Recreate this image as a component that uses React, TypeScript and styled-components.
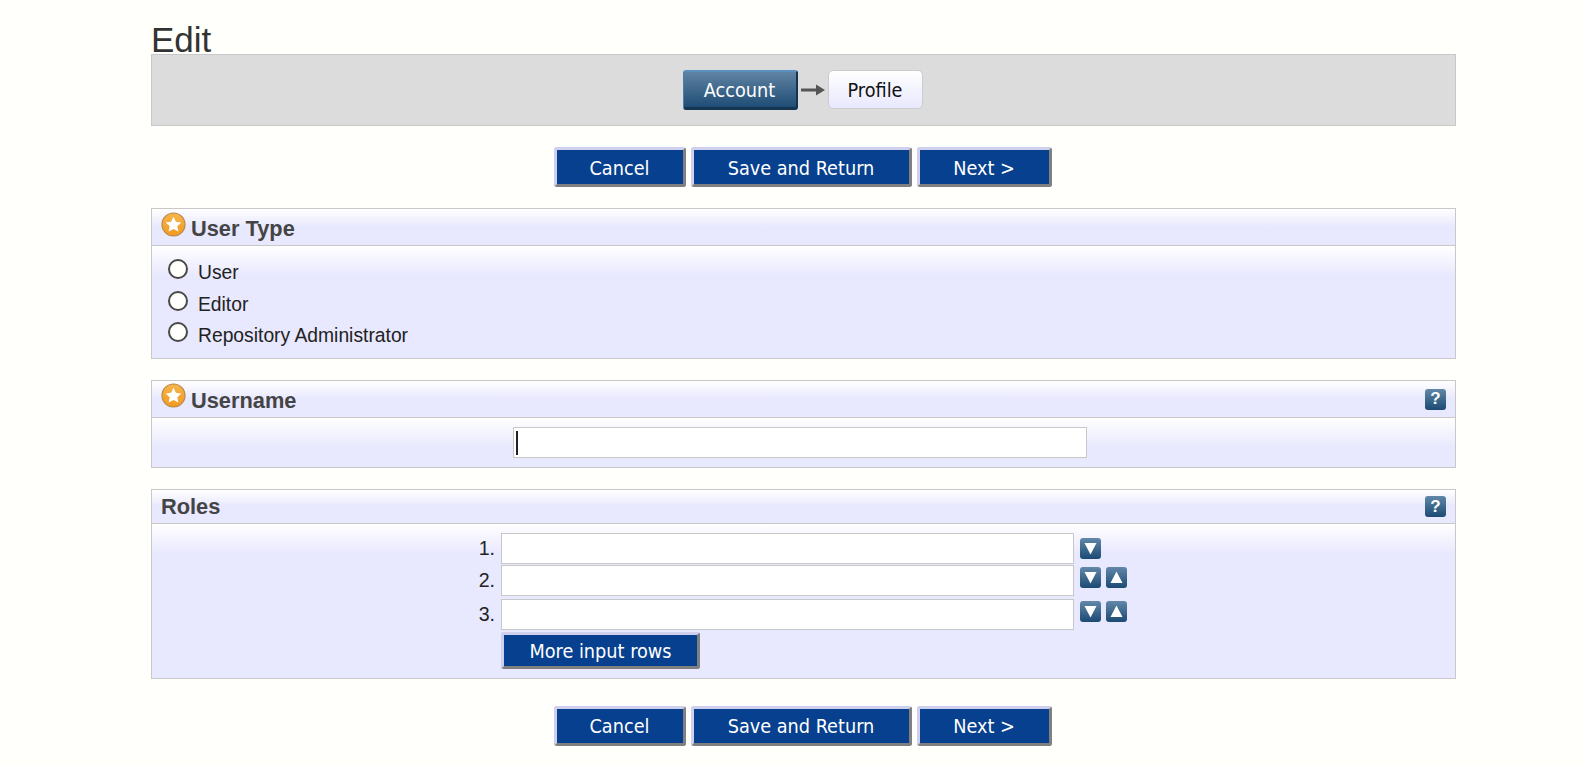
import styled, { createGlobalStyle } from "styled-components";

const GlobalStyle = createGlobalStyle`
  html, body {
    margin: 0;
    padding: 0;
    background: #fffffc;
    color: #222;
    font-family: "Liberation Sans", Arial, sans-serif;
  }
`;

const Page = styled.div`
  width: 1305px;
  margin-left: 151px;
  padding-bottom: 20px;
`;

const Title = styled.h1`
  margin: 0;
  height: 54px;
  padding-top: 22px;
  box-sizing: border-box;
  font-size: 35px;
  font-weight: 400;
  line-height: 36px;
  color: #333;
`;

const Steps = styled.div`
  box-sizing: border-box;
  height: 72px;
  background: #dcdcdd;
  border: 1px solid #c8c8c8;
  display: flex;
  align-items: center;
  justify-content: center;
  padding-right: 2px;
`;

const ActiveStep = styled.div`
  box-sizing: border-box;
  width: 115px;
  height: 40px;
  padding-top: 1px;
  display: flex;
  align-items: center;
  justify-content: center;
  border-radius: 3px;
  border-top: 2px solid #5a90c0;
  border-left: 1px solid #4f7ea8;
  border-right: 2px solid #14344f;
  border-bottom: 3px solid #14344f;
  background: linear-gradient(#5f83a3, #1f4d75);
  color: #fff;
  font-family: "DejaVu Sans", sans-serif;
  font-stretch: condensed;
  font-size: 19.7px;
`;

const Step = styled.div`
  box-sizing: border-box;
  width: 95px;
  height: 39px;
  margin-top: -1px;
  padding-top: 1px;
  display: flex;
  align-items: center;
  justify-content: center;
  border-radius: 5px;
  border: 1px solid #ccc;
  background: linear-gradient(#fff, #e8e8fe);
  color: #111;
  font-family: "DejaVu Sans", sans-serif;
  font-stretch: condensed;
  font-size: 19.7px;
`;

const StepArrow = styled.svg`
  width: 30px;
  height: 14px;
  display: block;
`;

const ButtonBar = styled.div<{ $top: number }>`
  margin-top: ${(p) => p.$top}px;
  padding-right: 2px;
  display: flex;
  justify-content: center;
  gap: 5px;
`;

const Button = styled.button<{ $width: number }>`
  box-sizing: border-box;
  width: ${(p) => p.$width}px;
  height: 40px;
  padding: 2px 0 0;
  border-style: solid;
  border-width: 3px;
  border-color: #cfcfee #808080 #808080 #cfcfee;
  border-radius: 3px;
  background: #07408f;
  color: #fff;
  font-family: "DejaVu Sans", sans-serif;
  font-stretch: condensed;
  font-size: 19.7px;
`;

const MoreButton = styled(Button)`
  height: 37px;
  margin-top: 2px;
  margin-left: 349px;
  display: block;
`;

const Section = styled.section`
  margin-top: 21px;
  border: 1px solid #c8c8c8;
`;

const SectionHead = styled.div<{ $height: number }>`
  box-sizing: border-box;
  height: ${(p) => p.$height}px;
  display: flex;
  align-items: center;
  gap: 5px;
  padding: 1px 9px 0;
  background: linear-gradient(#fff, #e8e8fe 50%);
  border-bottom: 1px solid #c8c8c8;
`;

const HeadTitle = styled.h2`
  margin: 3px 0 0;
  flex: 1;
  font-size: 21.8px;
  font-weight: 700;
  color: #444;
`;

const RolesTitle = styled(HeadTitle)`
  margin-top: 0;
`;

const StarIcon = styled.svg`
  width: 25px;
  height: 25px;
  display: block;
  margin-top: -7px;
`;

const HelpIcon = styled.span`
  width: 21px;
  height: 21px;
  display: flex;
  align-items: center;
  justify-content: center;
  border-radius: 3px;
  background: linear-gradient(#6288a9, #1b4a73);
  color: #fff;
  font-size: 17px;
  font-weight: 700;
`;

const SectionBody = styled.div`
  background: linear-gradient(#fff, #e8e8fe 30px);
`;

const RadioList = styled.div`
  padding: 9px 16px 8px;
`;

const RadioRow = styled.label`
  height: 31.5px;
  display: flex;
  align-items: flex-start;
  gap: 10px;
  font-size: 19.3px;
  line-height: 22px;
  color: #222;
`;

const Radio = styled.input`
  appearance: none;
  box-sizing: border-box;
  width: 20px;
  height: 20px;
  margin: 4px 0 0;
  border: 2px solid #484848;
  border-radius: 50%;
  background: #fffffc;
`;

const RadioText = styled.span`
  margin-top: 7px;
`;

const UsernameBody = styled(SectionBody)`
  padding: 9px 0 9px 361px;
`;

const InputWrap = styled.div`
  position: relative;
  width: 574px;
`;

const TextInput = styled.input`
  box-sizing: border-box;
  display: block;
  width: 100%;
  height: 31px;
  padding: 0 4px;
  border: 1px solid #c8c8c8;
  background: #fff;
  outline: none;
`;

const Caret = styled.span`
  position: absolute;
  left: 3px;
  top: 4px;
  width: 1.5px;
  height: 24px;
  background: #222;
`;

const RolesBody = styled(SectionBody)`
  padding: 9px 0 9px;
`;

const RoleRow = styled.div<{ $top: number }>`
  margin-top: ${(p) => p.$top}px;
  display: grid;
  grid-template-columns: 343px 573px auto;
  column-gap: 6px;
`;

const RoleNumber = styled.span`
  text-align: right;
  font-size: 19.6px;
  line-height: 31px;
  color: #222;
`;

const RoleInput = styled(TextInput)`
  width: 573px;
`;

const MoveGroup = styled.div<{ $top: number }>`
  margin-top: ${(p) => p.$top}px;
  display: flex;
  gap: 5px;
`;

const MoveButton = styled.button`
  width: 21px;
  height: 21px;
  padding: 0;
  border: none;
  border-radius: 3px;
  display: flex;
  align-items: center;
  justify-content: center;
  background: linear-gradient(#6288a9, #1b4a73);
`;

const MoveGlyph = styled.svg`
  width: 13px;
  height: 13px;
  display: block;
  fill: #fff;
`;

function Star() {
  return (
    <StarIcon viewBox="0 0 25 25">
      <defs>
        <linearGradient id="starBg" x1="0" y1="0" x2="0" y2="1">
          <stop offset="0" stopColor="#f7b54c" />
          <stop offset="1" stopColor="#f09a20" />
        </linearGradient>
      </defs>
      <circle cx="12.5" cy="12.5" r="11.5" fill="url(#starBg)" stroke="#b98a4a" strokeWidth="1.2" />
      <path
        d="M12.5 4.8l2.4 5 5.4.7-4 3.7 1.1 5.4-4.9-2.7-4.9 2.7 1.1-5.4-4-3.7 5.4-.7z"
        fill="#fff"
      />
    </StarIcon>
  );
}

function MoveDown() {
  return (
    <MoveButton type="button">
      <MoveGlyph viewBox="0 0 13 13">
        <path d="M0.5 1h12L6.5 12.5z" />
      </MoveGlyph>
    </MoveButton>
  );
}

function MoveUp() {
  return (
    <MoveButton type="button">
      <MoveGlyph viewBox="0 0 13 13">
        <path d="M0.5 12h12L6.5 0.5z" />
      </MoveGlyph>
    </MoveButton>
  );
}

function Actions({ top }: { top: number }) {
  return (
    <ButtonBar $top={top}>
      <Button $width={132}>Cancel</Button>
      <Button $width={221}>Save and Return</Button>
      <Button $width={135}>Next &gt;</Button>
    </ButtonBar>
  );
}

export default function App() {
  return (
    <Page>
      <GlobalStyle />
      <Title>Edit</Title>
      <Steps>
        <ActiveStep>Account</ActiveStep>
        <StepArrow viewBox="0 0 30 14">
          <path d="M3 5.5h15V1.5l9 5.5-9 5.5V8.5H3z" fill="#555" />
        </StepArrow>
        <Step>Profile</Step>
      </Steps>

      <Actions top={21} />

      <Section>
        <SectionHead $height={37}>
          <Star />
          <HeadTitle>User Type</HeadTitle>
        </SectionHead>
        <SectionBody>
          <RadioList>
            <RadioRow>
              <Radio type="radio" name="type" />
              <RadioText>User</RadioText>
            </RadioRow>
            <RadioRow>
              <Radio type="radio" name="type" />
              <RadioText>Editor</RadioText>
            </RadioRow>
            <RadioRow>
              <Radio type="radio" name="type" />
              <RadioText>Repository Administrator</RadioText>
            </RadioRow>
          </RadioList>
        </SectionBody>
      </Section>

      <Section>
        <SectionHead $height={37}>
          <Star />
          <HeadTitle>Username</HeadTitle>
          <HelpIcon>?</HelpIcon>
        </SectionHead>
        <UsernameBody>
          <InputWrap>
            <TextInput type="text" />
            <Caret />
          </InputWrap>
        </UsernameBody>
      </Section>

      <Section>
        <SectionHead $height={34}>
          <RolesTitle>Roles</RolesTitle>
          <HelpIcon>?</HelpIcon>
        </SectionHead>
        <RolesBody>
          <RoleRow $top={0}>
            <RoleNumber>1.</RoleNumber>
            <RoleInput type="text" />
            <MoveGroup $top={5}>
              <MoveDown />
            </MoveGroup>
          </RoleRow>
          <RoleRow $top={1}>
            <RoleNumber>2.</RoleNumber>
            <RoleInput type="text" />
            <MoveGroup $top={2}>
              <MoveDown />
              <MoveUp />
            </MoveGroup>
          </RoleRow>
          <RoleRow $top={3}>
            <RoleNumber>3.</RoleNumber>
            <RoleInput type="text" />
            <MoveGroup $top={2}>
              <MoveDown />
              <MoveUp />
            </MoveGroup>
          </RoleRow>
          <MoreButton $width={199}>More input rows</MoreButton>
        </RolesBody>
      </Section>

      <Actions top={27} />
    </Page>
  );
}
